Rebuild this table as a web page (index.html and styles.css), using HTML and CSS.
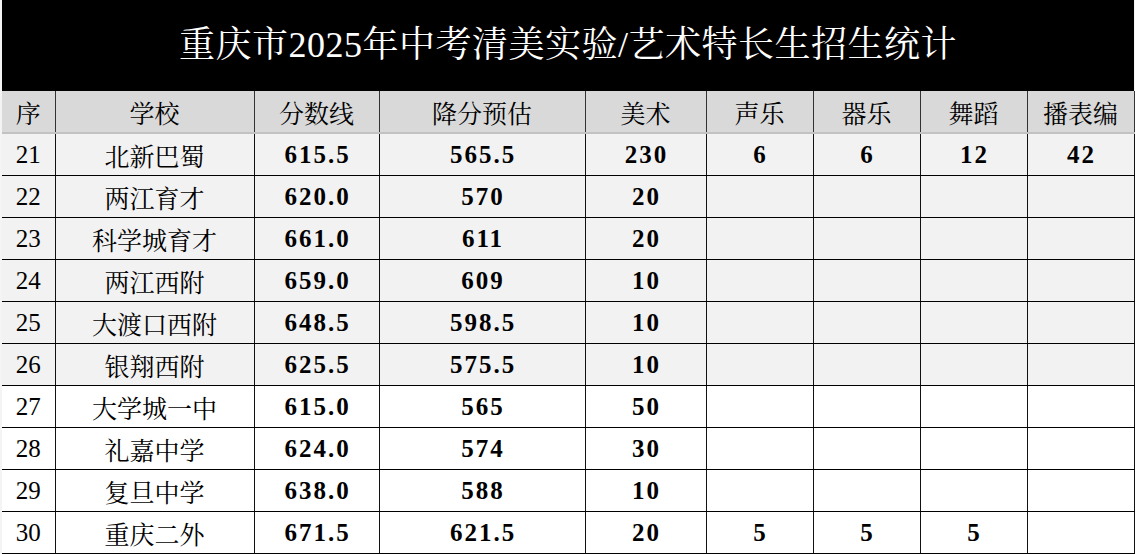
FILE: index.html
```html
<!DOCTYPE html>
<html lang="zh-CN">
<head>
<meta charset="utf-8">
<title>重庆市2025年中考清美实验/艺术特长生招生统计</title>
<link rel="stylesheet" href="styles.css">
</head>
<body>
<div class="sheet">
  <div class="title">重庆市2025年中考清美实验/艺术特长生招生统计</div>
  <table class="grid">
    <colgroup>
      <col class="c-no"><col class="c-school"><col class="c-score"><col class="c-est"><col class="c-art"><col class="c-sm"><col class="c-sm"><col class="c-sm"><col class="c-sm">
    </colgroup>
    <thead>
      <tr><th>序</th><th>学校</th><th>分数线</th><th>降分预估</th><th>美术</th><th>声乐</th><th>器乐</th><th>舞蹈</th><th>播表编</th></tr>
    </thead>
    <tbody>
      <tr class="shade"><td>21</td><td>北新巴蜀</td><td class="b">615.5</td><td class="b">565.5</td><td class="b">230</td><td class="b">6</td><td class="b">6</td><td class="b">12</td><td class="b">42</td></tr>
      <tr class="shade"><td>22</td><td>两江育才</td><td class="b">620.0</td><td class="b">570</td><td class="b">20</td><td></td><td></td><td></td><td></td></tr>
      <tr class="shade"><td>23</td><td>科学城育才</td><td class="b">661.0</td><td class="b">611</td><td class="b">20</td><td></td><td></td><td></td><td></td></tr>
      <tr class="shade"><td>24</td><td>两江西附</td><td class="b">659.0</td><td class="b">609</td><td class="b">10</td><td></td><td></td><td></td><td></td></tr>
      <tr class="shade"><td>25</td><td>大渡口西附</td><td class="b">648.5</td><td class="b">598.5</td><td class="b">10</td><td></td><td></td><td></td><td></td></tr>
      <tr class="shade"><td>26</td><td>银翔西附</td><td class="b">625.5</td><td class="b">575.5</td><td class="b">10</td><td></td><td></td><td></td><td></td></tr>
      <tr><td>27</td><td>大学城一中</td><td class="b">615.0</td><td class="b">565</td><td class="b">50</td><td></td><td></td><td></td><td></td></tr>
      <tr><td>28</td><td>礼嘉中学</td><td class="b">624.0</td><td class="b">574</td><td class="b">30</td><td></td><td></td><td></td><td></td></tr>
      <tr><td>29</td><td>复旦中学</td><td class="b">638.0</td><td class="b">588</td><td class="b">10</td><td></td><td></td><td></td><td></td></tr>
      <tr><td>30</td><td>重庆二外</td><td class="b">671.5</td><td class="b">621.5</td><td class="b">20</td><td class="b">5</td><td class="b">5</td><td class="b">5</td><td></td></tr>
    </tbody>
  </table>
</div>
</body>
</html>
```
FILE: styles.css
```css
html, body {
  margin: 0;
  padding: 0;
  background: #f4f4f4;
}
body {
  font-family: "Liberation Serif", "Noto Serif CJK SC", "Noto Sans CJK SC", serif;
  color: #000;
  overflow: hidden;
}
.sheet {
  width: 1132px;
  margin-left: 2px;
  background: #fff;
}
.title {
  height: 91px;
  background: #000;
  color: #fff;
  font-size: 36px;
  line-height: 91px;
  text-align: center;
  letter-spacing: 0.5px;
}
.grid {
  width: 1132px;
  border-collapse: collapse;
  table-layout: fixed;
}
.c-no { width: 53px; }
.c-school { width: 199px; }
.c-score { width: 125px; }
.c-est { width: 206px; }
.c-art { width: 121px; }
.c-sm { width: 107px; }
.grid th,
.grid td {
  height: 41px;
  padding: 0;
  text-align: center;
  vertical-align: middle;
  font-size: 25px;
  font-weight: 400;
  border-left: 1px solid #111;
  border-right: 1px solid #111;
  border-bottom: 1px solid #000;
  white-space: nowrap;
}
.grid th:first-child,
.grid td:first-child {
  border-left: none;
}
.grid thead th {
  background: #d9d9d9;
  border-bottom: 2px solid #c2c2c2;
  border-left-color: #333;
  border-right-color: #333;
}
.grid tr.shade td {
  background: #f2f2f2;
}
.grid td.b {
  font-weight: 700;
  letter-spacing: 2px;
  text-indent: 2px;
}
```
